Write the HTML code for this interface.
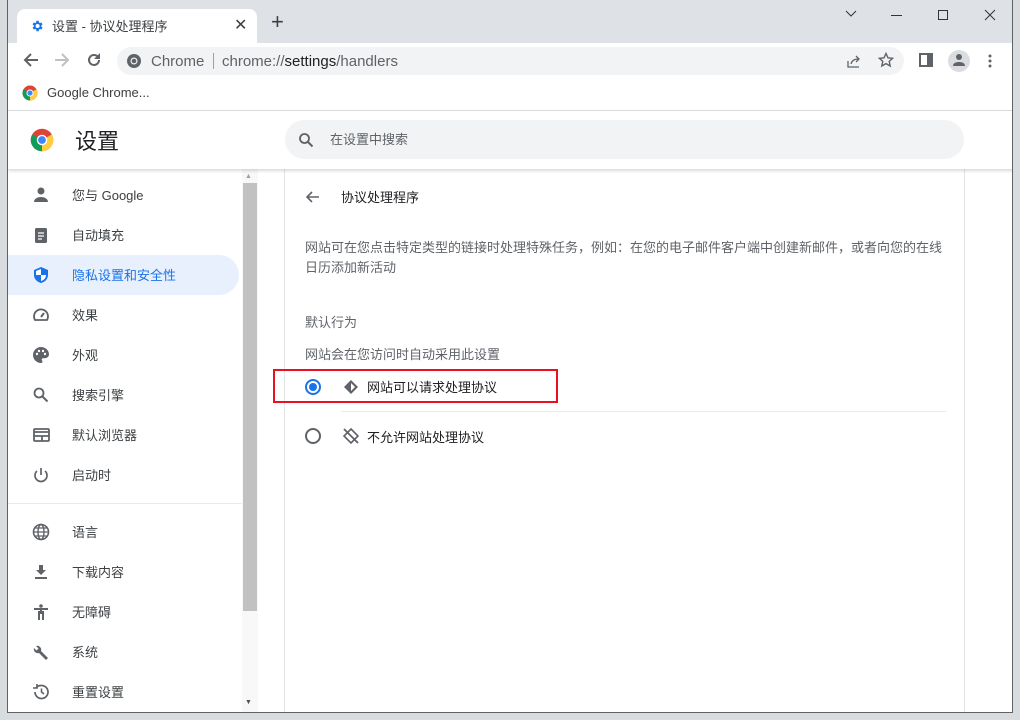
<!DOCTYPE html>
<html><head><meta charset="utf-8"><style>
*{margin:0;padding:0;box-sizing:border-box}
body{width:1020px;height:720px;background:#d9dcdf;font-family:"Liberation Sans","Noto Sans CJK SC",sans-serif;position:relative;overflow:hidden;color:#202124}
.win{position:absolute;left:7px;top:0;width:1006px;height:713px;border:1px solid #5f6368;border-top:none;background:#fff;overflow:hidden}
.abs{position:absolute}
.tabs{left:0;top:0;width:1006px;height:43px;background:#dee1e6}
.tab{left:9px;top:9px;width:240px;height:34px;background:#fff;border-radius:8px 8px 0 0;font-size:13px}
.toolbar{left:0;top:43px;width:1006px;height:34px;background:#fff}
.omni{left:109px;top:47px;width:787px;height:28px;background:#f1f3f4;border-radius:14px;font-size:15px;color:#5f6368}
.bm{top:77px;left:0;width:1006px;height:33px;font-size:13px}
.sep{top:110px;left:0;width:1006px;height:1px;background:#dadce0}
.hdr{top:111px;left:0;width:1006px;height:58px;background:#fff;box-shadow:0 2px 3px rgba(0,0,0,.15);z-index:2}
.search{left:277px;top:9px;width:679px;height:39px;background:#f1f3f4;border-radius:20px;font-size:13px;color:#5f6368}
.side{top:169px;left:0;width:234px;height:544px;font-size:13px;color:#3c4043}
.item{position:absolute;left:0;width:231px;height:40px}
.item span{position:absolute;left:64px;top:10px}
.item svg{position:absolute;left:24px;top:11px}
.sel{background:#e8f0fe;border-radius:0 20px 20px 0;color:#1a73e8}
.sb{left:234px;top:169px;width:16px;height:544px;background:#f8f8f8}
.main{left:250px;top:169px;width:756px;height:544px;background:#fff}
.card{left:26px;top:0;width:681px;height:544px;background:#fff;border-left:1px solid #e4e5e7;border-right:1px solid #e4e5e7}
.t13{font-size:13px;color:#5f6368}
</style></head><body>
<div class="win">
<div class="abs tabs">
 <div class="abs tab">
  <svg class="abs" style="left:13px;top:10px" width="14" height="14" viewBox="0 0 24 24"><path fill="#1a73e8" d="M19.4 13a7.5 7.5 0 000-2l2.1-1.6-2-3.5-2.5 1a7 7 0 00-1.7-1L15 3h-4l-.4 2.9a7 7 0 00-1.7 1l-2.5-1-2 3.5L6.6 11a7.5 7.5 0 000 2l-2.1 1.6 2 3.5 2.5-1a7 7 0 001.7 1L11 21h4l.4-2.9a7 7 0 001.7-1l2.5 1 2-3.5zM13 15.5a3.5 3.5 0 110-7 3.5 3.5 0 010 7z"/></svg>
  <span class="abs" style="left:35px;top:7px;color:#3c4043">设置 - 协议处理程序</span>
  <span class="abs" style="left:217px;top:6px;font-size:16px;color:#3c4043">✕</span>
 </div>
 <span class="abs" style="left:263px;top:11px;font-size:22px;line-height:22px;color:#3c4043">+</span>
 <svg class="abs" style="left:837px;top:10px" width="12" height="8"><path d="M1 1l5 5 5-5" stroke="#333" fill="none"/></svg>
 <div class="abs" style="left:883px;top:15px;width:11px;height:1px;background:#333"></div>
 <div class="abs" style="left:930px;top:10px;width:10px;height:10px;border:1px solid #333"></div>
 <svg class="abs" style="left:976px;top:9px" width="12" height="12"><path d="M1 1l10 10M11 1L1 11" stroke="#333"/></svg>
</div>
<div class="abs toolbar">
 <svg class="abs" style="left:15px;top:9px" width="16" height="16" viewBox="0 0 16 16"><path d="M15 8H2M8 2L2 8l6 6" stroke="#5f6368" stroke-width="2" fill="none"/></svg>
 <svg class="abs" style="left:46px;top:9px" width="16" height="16" viewBox="0 0 16 16"><path d="M1 8h13M8 2l6 6-6 6" stroke="#bdc1c6" stroke-width="2" fill="none"/></svg>
 <svg class="abs" style="left:78px;top:9px" width="16" height="16" viewBox="0 0 16 16"><path d="M13 8a5 5 0 11-1.5-3.6" stroke="#5f6368" stroke-width="2" fill="none"/><path d="M14 1v6H8z" fill="#5f6368"/></svg>
</div>
<div class="abs omni">
 <svg class="abs" style="left:9px;top:6px" width="16" height="16" viewBox="0 0 16 16"><circle cx="8" cy="8" r="7" fill="#5f6368"/><circle cx="8" cy="8" r="3.5" fill="#f1f3f4"/><circle cx="8" cy="8" r="2.3" fill="#5f6368"/></svg>
 <span class="abs" style="left:34px;top:6px">Chrome</span>
 <div class="abs" style="left:96px;top:6px;width:1px;height:16px;background:#9aa0a6"></div>
 <span class="abs" style="left:105px;top:6px">chrome://<span style="color:#202124">settings</span>/handlers</span>
 <svg class="abs" style="left:729px;top:6px" width="16" height="16" viewBox="0 0 16 16"><path d="M2 8v6h11M5 11c1-4 4-5 7-5M10 3l3 3-3 3" stroke="#5f6368" stroke-width="1.3" fill="none"/></svg>
 <svg class="abs" style="left:761px;top:5px" width="16" height="16" viewBox="0 0 16 16"><path d="M8 1.5l2 4.3 4.6.5-3.4 3.1 1 4.6L8 11.6 3.8 14l1-4.6L1.4 6.3 6 5.8z" stroke="#5f6368" stroke-width="1.4" fill="none"/></svg>
</div>
<div class="abs" style="left:911px;top:53px;width:14px;height:14px;border:2px solid #5f6368;border-right-width:6px"></div>
<div class="abs" style="left:940px;top:50px;width:22px;height:22px;border-radius:50%;background:#dadce0"></div>
<svg class="abs" style="left:944px;top:53px" width="14" height="14" viewBox="0 0 14 14"><circle cx="7" cy="4" r="3" fill="#5f6368"/><path d="M1 13c0-3 3-4 6-4s6 1 6 4z" fill="#5f6368"/></svg>
<svg class="abs" style="left:980px;top:53px" width="4" height="16"><circle cx="2" cy="3" r="1.5" fill="#5f6368"/><circle cx="2" cy="8" r="1.5" fill="#5f6368"/><circle cx="2" cy="13" r="1.5" fill="#5f6368"/></svg>
<div class="abs bm">
 <svg class="abs" style="left:14px;top:8px" width="16" height="16" viewBox="0 0 16 16"><circle cx="8" cy="8" r="7.5" fill="#db4437"/><path d="M8 8L1.5 4.3A7.5 7.5 0 008 15.5z" fill="#0f9d58"/><path d="M8 8l6.5-3.7A7.5 7.5 0 018 15.5z" fill="#ffcd40"/><circle cx="8" cy="8" r="3.5" fill="#fff"/><circle cx="8" cy="8" r="2.6" fill="#4285f4"/></svg>
 <span class="abs" style="left:39px;top:8px;color:#3c4043">Google Chrome...</span>
</div>
<div class="abs sep"></div>
<div class="abs hdr">
 <svg class="abs" style="left:22px;top:17px" width="24" height="24" viewBox="0 0 16 16"><circle cx="8" cy="8" r="7.5" fill="#db4437"/><path d="M8 8L1.5 4.3A7.5 7.5 0 008 15.5z" fill="#0f9d58"/><path d="M8 8l6.5-3.7A7.5 7.5 0 018 15.5z" fill="#ffcd40"/><circle cx="8" cy="8" r="3.5" fill="#fff"/><circle cx="8" cy="8" r="2.6" fill="#4285f4"/></svg>
 <span class="abs" style="left:67px;top:13px;font-size:22px;color:#202124">设置</span>
 <div class="abs search">
  <svg class="abs" style="left:13px;top:12px" width="16" height="16" viewBox="0 0 16 16"><circle cx="6.5" cy="6.5" r="4.5" stroke="#5f6368" stroke-width="1.8" fill="none"/><path d="M10 10l4.5 4.5" stroke="#5f6368" stroke-width="2"/></svg>
  <span class="abs" style="left:45px;top:9px">在设置中搜索</span>
 </div>
</div>
<div class="abs side">
 <div class="item" style="top:6px"><svg width="18" height="18" viewBox="0 0 18 18"><circle cx="9" cy="5" r="3.5" fill="#5f6368"/><path d="M2 16c0-3.5 4-5 7-5s7 1.5 7 5z" fill="#5f6368"/></svg><span>您与 Google</span></div>
 <div class="item" style="top:46px"><svg width="18" height="18" viewBox="0 0 18 18"><rect x="3" y="2" width="12" height="15" rx="1.5" fill="#5f6368"/><path d="M6 7h6M6 10h6M6 13h4" stroke="#fff" stroke-width="1.3"/></svg><span>自动填充</span></div>
 <div class="item sel" style="top:86px"><svg width="18" height="18" viewBox="0 0 18 18"><path d="M9 1l7 3v5c0 4-3 7-7 8-4-1-7-4-7-8V4z" fill="#1a73e8"/><path d="M9 3v6H4V5z" fill="#fff"/><path d="M9 9h5c0 3-2 5-5 6z" fill="#fff"/></svg><span>隐私设置和安全性</span></div>
 <div class="item" style="top:126px"><svg width="18" height="18" viewBox="0 0 18 18"><path d="M3 14a7 7 0 1112 0z" stroke="#5f6368" stroke-width="1.8" fill="none"/><path d="M9 11l3-4" stroke="#5f6368" stroke-width="2"/></svg><span>效果</span></div>
 <div class="item" style="top:166px"><svg width="18" height="18" viewBox="0 0 18 18"><path d="M9 1a8 8 0 000 16c1 0 1.5-.7 1.5-1.4 0-1-.8-1.2-.8-2 0-.8.6-1.4 1.4-1.4H13a4 4 0 004-4C17 4.5 13.4 1 9 1z" fill="#5f6368"/><circle cx="5" cy="8" r="1.2" fill="#fff"/><circle cx="7" cy="5" r="1.2" fill="#fff"/><circle cx="11" cy="5" r="1.2" fill="#fff"/><circle cx="13" cy="8" r="1.2" fill="#fff"/></svg><span>外观</span></div>
 <div class="item" style="top:206px"><svg width="18" height="18" viewBox="0 0 18 18"><circle cx="7" cy="7" r="4.5" stroke="#5f6368" stroke-width="1.8" fill="none"/><path d="M10.5 10.5l5 5" stroke="#5f6368" stroke-width="2"/></svg><span>搜索引擎</span></div>
 <div class="item" style="top:246px"><svg width="18" height="18" viewBox="0 0 18 18"><rect x="2" y="3" width="15" height="12" rx="1" stroke="#5f6368" stroke-width="1.8" fill="none"/><path d="M2 6h15M2 10h15M10 10v5" stroke="#5f6368" stroke-width="1.8"/></svg><span>默认浏览器</span></div>
 <div class="item" style="top:286px"><svg width="18" height="18" viewBox="0 0 18 18"><path d="M5 5a6 6 0 108 0" stroke="#5f6368" stroke-width="1.7" fill="none"/><path d="M9 2v7" stroke="#5f6368" stroke-width="1.7"/></svg><span>启动时</span></div>
 <div class="abs" style="left:0;top:334px;width:234px;height:1px;background:#e8eaed"></div>
 <div class="item" style="top:343px"><svg width="18" height="18" viewBox="0 0 18 18"><circle cx="9" cy="9" r="7.5" stroke="#5f6368" stroke-width="1.6" fill="none"/><ellipse cx="9" cy="9" rx="3" ry="7.5" stroke="#5f6368" stroke-width="1.4" fill="none"/><path d="M1.5 9h15M3 5h12M3 13h12" stroke="#5f6368" stroke-width="1.3"/></svg><span>语言</span></div>
 <div class="item" style="top:383px"><svg width="18" height="18" viewBox="0 0 18 18"><path d="M7 2h4v5h3l-5 5-5-5h3z" fill="#5f6368"/><path d="M3 15h12" stroke="#5f6368" stroke-width="2"/></svg><span>下载内容</span></div>
 <div class="item" style="top:423px"><svg width="18" height="18" viewBox="0 0 18 18"><circle cx="9" cy="3" r="1.8" fill="#5f6368"/><path d="M2 6h14M9 6v5M7 8v9M11 8v9" stroke="#5f6368" stroke-width="2"/></svg><span>无障碍</span></div>
 <div class="item" style="top:463px"><svg width="18" height="18" viewBox="0 0 18 18"><path d="M16 15l-7-7a4 4 0 00-5-5l2.5 2.5-2 2L2 5a4 4 0 005 5l7 7z" fill="#5f6368"/></svg><span>系统</span></div>
 <div class="item" style="top:503px"><svg width="18" height="18" viewBox="0 0 18 18"><path d="M3 9a6.5 6.5 0 106.5-6.5A6.5 6.5 0 004 5" stroke="#5f6368" stroke-width="1.7" fill="none"/><path d="M1 5h4V1" stroke="#5f6368" stroke-width="1.6" fill="none"/><path d="M9.5 5.5V9l2.5 2" stroke="#5f6368" stroke-width="1.6" fill="none"/></svg><span>重置设置</span></div>
</div>
<div class="abs sb">
 <div class="abs" style="left:3px;top:4px;font-size:7px;color:#a0a0a0">▲</div>
 <div class="abs" style="left:1px;top:14px;width:14px;height:428px;background:#c1c1c1"></div>
 <div class="abs" style="left:3px;top:530px;font-size:7px;color:#505050">▼</div>
</div>
<div class="abs main">
 <div class="abs card">
  <svg class="abs" style="left:20px;top:20px" width="16" height="16" viewBox="0 0 16 16"><path d="M14 8H2M7 3L2 8l5 5" stroke="#5f6368" stroke-width="1.6" fill="none"/></svg>
  <span class="abs t13" style="left:56px;top:18px;color:#202124">协议处理程序</span>
  <div class="abs t13" style="left:20px;top:69px;width:645px;line-height:20px">网站可在您点击特定类型的链接时处理特殊任务，例如：在您的电子邮件客户端中创建新邮件，或者向您的在线日历添加新活动</div>
  <span class="abs t13" style="left:20px;top:143px">默认行为</span>
  <span class="abs t13" style="left:20px;top:175px">网站会在您访问时自动采用此设置</span>
  <div class="abs" style="left:20px;top:210px;width:16px;height:16px;border:2px solid #1a73e8;border-radius:50%"></div>
  <div class="abs" style="left:24px;top:214px;width:8px;height:8px;background:#1a73e8;border-radius:50%"></div>
  <svg class="abs" style="left:58px;top:210px" width="16" height="16" viewBox="0 0 16 16"><path d="M8 1l7 7-7 7-7-7z" fill="#5f6368"/><path d="M8 4l4 4-4 4z" fill="#fff"/></svg>
  <span class="abs t13" style="left:82px;top:208px;color:#202124">网站可以请求处理协议</span>
  <div class="abs" style="left:56px;top:242px;width:605px;height:1px;background:#e8eaed"></div>
  <div class="abs" style="left:20px;top:259px;width:16px;height:16px;border:2px solid #5f6368;border-radius:50%"></div>
  <svg class="abs" style="left:58px;top:259px" width="16" height="16" viewBox="0 0 16 16"><path d="M8 1l7 7-7 7-7-7z" stroke="#5f6368" stroke-width="1.6" fill="none"/><path d="M1 1l14 14" stroke="#5f6368" stroke-width="1.8"/></svg>
  <span class="abs t13" style="left:82px;top:258px;color:#202124">不允许网站处理协议</span>
 </div>
</div>
<div class="abs" style="left:265px;top:369px;width:285px;height:34px;border:2px solid #e81123;z-index:5"></div>
</div>
</body></html>
